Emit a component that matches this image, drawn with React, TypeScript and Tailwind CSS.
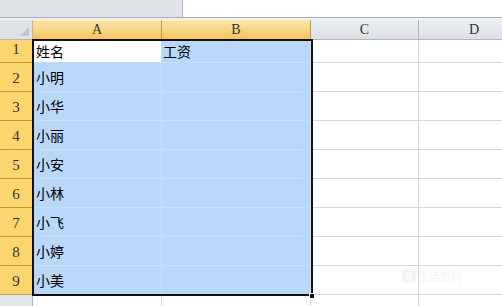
const rows = [
  { n: 1, a: "姓名", b: "工资", h: "h-[23px]" },
  { n: 2, a: "小明", b: "", h: "h-[29px]" },
  { n: 3, a: "小华", b: "", h: "h-[29px]" },
  { n: 4, a: "小丽", b: "", h: "h-[29px]" },
  { n: 5, a: "小安", b: "", h: "h-[29px]" },
  { n: 6, a: "小林", b: "", h: "h-[29px]" },
  { n: 7, a: "小飞", b: "", h: "h-[29px]" },
  { n: 8, a: "小婷", b: "", h: "h-[29px]" },
  { n: 9, a: "小美", b: "", h: "h-[29px]" },
];

const cjk = { fontFamily: '"Noto Sans CJK SC", "Noto Sans", sans-serif' };
const serif = { fontFamily: '"Liberation Serif", "DejaVu Serif", serif' };

export default function App() {
  return (
    <div className="w-[502px] h-[306px] overflow-hidden bg-white relative">
      {/* formula bar strip */}
      <div className="flex h-[17px]">
        <div className="w-[183px] bg-[#dfe3e8] border-r border-[#b4b9c0]" />
        <div className="flex-1 bg-white" />
      </div>
      <div className="h-[3px] border-t border-[#a9aeb5] bg-[#eef0f3]" />

      {/* column headers */}
      <div className="flex h-[20px] text-[14px] text-[#333]" style={serif}>
        <div className="w-[33px] shrink-0 bg-[#dfe3e8] border-r border-b border-[#b0b6bd] relative">
          <div className="absolute right-[3px] bottom-[3px] w-0 h-0 border-l-[9px] border-l-transparent border-b-[9px] border-b-[#c2c7ce]" />
        </div>
        <div className="w-[129px] shrink-0 flex items-center justify-center bg-gradient-to-b from-[#fbe7ad] to-[#f5c45c] border-r border-b border-[#c89a3e]">
          A
        </div>
        <div className="w-[149px] shrink-0 flex items-center justify-center bg-gradient-to-b from-[#fbe7ad] to-[#f5c45c] border-r border-b border-[#c89a3e]">
          B
        </div>
        <div className="w-[108px] shrink-0 flex items-center justify-center bg-gradient-to-b from-[#eaedf1] to-[#dde1e6] border-r border-b border-[#b0b6bd]">
          C
        </div>
        <div className="w-[110px] shrink-0 flex items-center justify-center bg-gradient-to-b from-[#eaedf1] to-[#dde1e6] border-b border-[#b0b6bd]">
          D
        </div>
      </div>

      {/* rows */}
      <div className="relative">
        {rows.map((r) => (
          <div key={r.n} className={`flex ${r.h}`}>
            <div
              className="w-[33px] shrink-0 flex items-end justify-center pb-[2px] bg-[#fbd66e] border-r border-b border-[#c89a3e] text-[15px] text-[#333]"
              style={serif}
            >
              {r.n}
            </div>
            <div
              className={`w-[129px] shrink-0 flex items-center pl-[3px] text-[14px] text-black border-r border-b ${
                r.n === 1 ? "bg-white border-[#c5dcf5]" : "bg-[#b8d7f9] border-[#c6dffa]"
              }`}
              style={cjk}
            >
              {r.a}
            </div>
            <div
              className="w-[149px] shrink-0 flex items-center pl-[1px] text-[14px] text-black bg-[#b8d7f9] border-r border-b border-[#c6dffa]"
              style={cjk}
            >
              {r.b}
            </div>
            <div className="w-[108px] shrink-0 border-r border-b border-[#d8d8d8]" />
            <div className="w-[110px] shrink-0 border-b border-[#d8d8d8]" />
          </div>
        ))}
        <div className="flex h-[20px]">
          <div className="w-[33px] shrink-0 bg-[#e4e7eb] border-r border-[#b0b6bd]" />
          <div className="w-[129px] shrink-0 border-r border-[#d8d8d8]" />
          <div className="w-[149px] shrink-0 border-r border-[#d8d8d8]" />
          <div className="w-[108px] shrink-0 border-r border-[#d8d8d8]" />
        </div>

        {/* selection border */}
        <div className="absolute left-[32px] top-[-1px] w-[281px] h-[257px] border-2 border-[#111] pointer-events-none" />
        <div className="absolute left-[309px] top-[253px] w-[6px] h-[6px] bg-[#111] border border-white" />

        {/* watermark */}
        <div className="absolute left-[402px] top-[228px] flex items-center gap-[2px] opacity-[0.04]">
          <div className="w-[14px] h-[14px] rounded-[3px] bg-black text-white text-[11px] font-bold flex items-center justify-center" style={{ fontFamily: '"Liberation Sans", sans-serif' }}>
            S
          </div>
          <span className="text-[11px] font-bold" style={cjk}>
            生活百科
          </span>
        </div>
      </div>
    </div>
  );
}
